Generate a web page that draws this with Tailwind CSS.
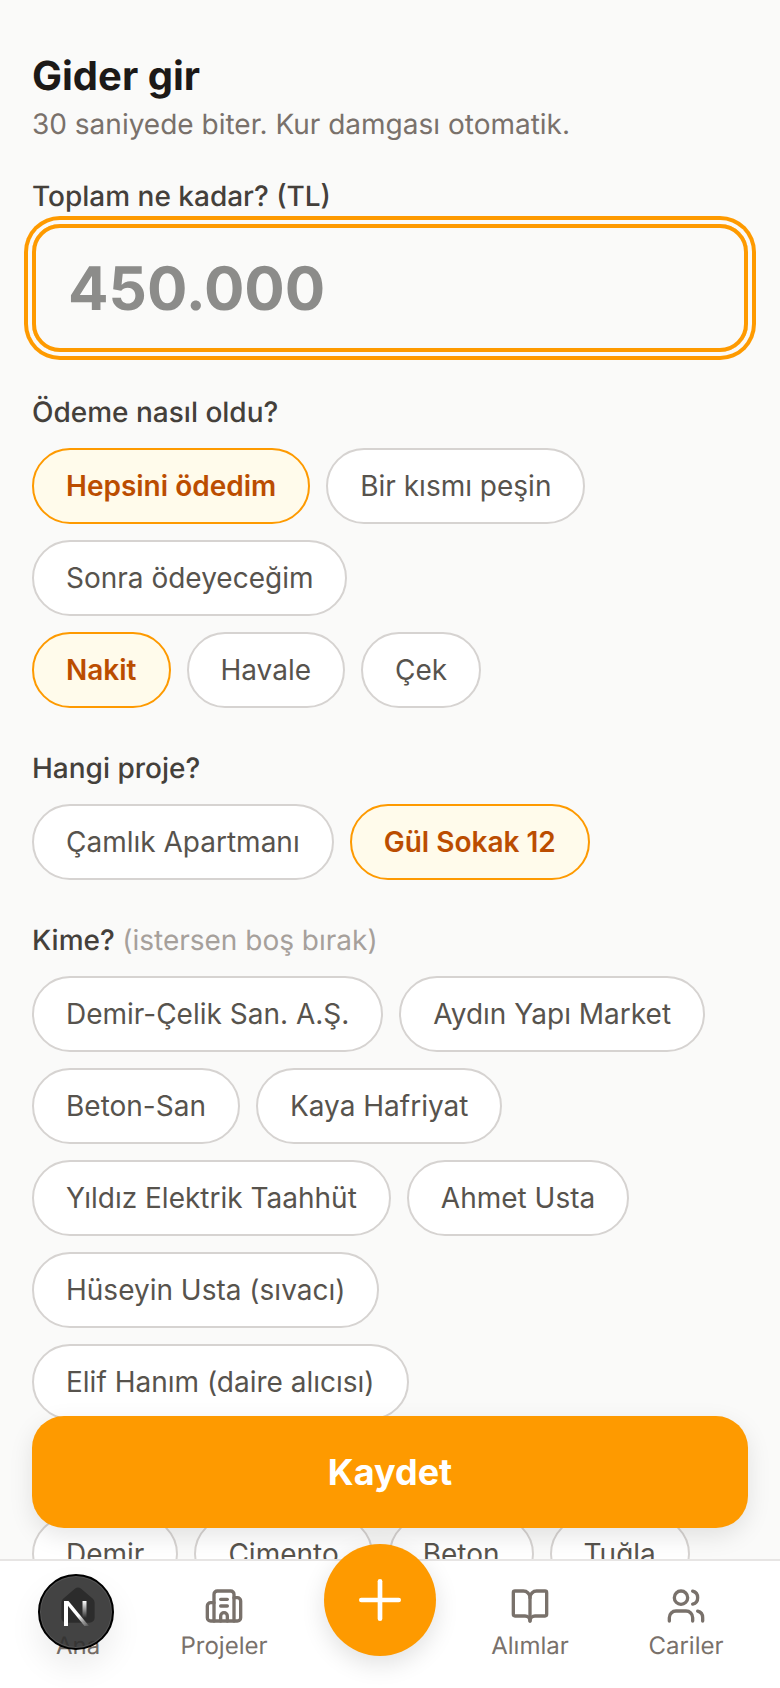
<!DOCTYPE html>
<html lang="tr">
<head>
  <meta charset="UTF-8">
  <meta name="viewport" content="width=device-width, initial-scale=1.0">
  <title>Gider gir</title>
  <script src="https://cdn.jsdelivr.net/npm/@tailwindcss/browser@4"></script>
</head>
<body class="bg-stone-50 font-['Inter',sans-serif] antialiased [text-rendering:geometricPrecision]">
  <div class="relative h-[1688px] w-[780px] overflow-hidden">
    <!-- Form -->
    <main class="px-8 pt-12">
      <h1 class="text-[40px] leading-[56px] font-bold text-stone-900">Gider gir</h1>
      <p class="text-[28px] leading-[40px] text-stone-500">30 saniyede biter. Kur damgası otomatik.</p>

      <label class="mt-8 block text-[28px] leading-[40px] font-medium text-stone-700">Toplam ne kadar? (TL)</label>
      <div class="mt-2 flex h-[128px] items-center rounded-[28px] border-4 border-amber-500 px-8 pt-[2px] text-[60px] font-bold text-[#8c8c8a] shadow-[0_0_0_4px_#fafaf9,0_0_0_8px_#fe9a00]">450.000</div>

      <p class="mt-10 text-[28px] leading-[40px] font-medium text-stone-700">Ödeme nasıl oldu?</p>
      <div class="mt-4 flex flex-wrap gap-4">
        <button class="h-[76px] rounded-full border-2 border-amber-500 bg-amber-50 px-8 text-[28px] font-semibold text-amber-700">Hepsini ödedim</button>
        <button class="h-[76px] rounded-full border-2 border-stone-300 bg-white px-8 text-[28px] text-stone-600">Bir kısmı peşin</button>
        <button class="h-[76px] rounded-full border-2 border-stone-300 bg-white px-8 text-[28px] text-stone-600">Sonra ödeyeceğim</button>
      </div>
      <div class="mt-4 flex flex-wrap gap-4">
        <button class="h-[76px] rounded-full border-2 border-amber-500 bg-amber-50 px-8 text-[28px] font-semibold text-amber-700">Nakit</button>
        <button class="h-[76px] rounded-full border-2 border-stone-300 bg-white px-8 text-[28px] text-stone-600">Havale</button>
        <button class="h-[76px] rounded-full border-2 border-stone-300 bg-white px-8 text-[28px] text-stone-600">Çek</button>
      </div>

      <p class="mt-10 text-[28px] leading-[40px] font-medium text-stone-700">Hangi proje?</p>
      <div class="mt-4 flex flex-wrap gap-4">
        <button class="h-[76px] rounded-full border-2 border-stone-300 bg-white px-8 text-[28px] text-stone-600">Çamlık Apartmanı</button>
        <button class="h-[76px] rounded-full border-2 border-amber-500 bg-amber-50 px-8 text-[28px] font-semibold text-amber-700">Gül Sokak 12</button>
      </div>

      <p class="mt-10 text-[28px] leading-[40px] font-medium text-stone-700">Kime? <span class="font-normal text-stone-400">(istersen boş bırak)</span></p>
      <div class="mt-4 flex flex-wrap gap-4">
        <button class="h-[76px] rounded-full border-2 border-stone-300 bg-white px-8 text-[28px] text-stone-600">Demir-Çelik San. A.Ş.</button>
        <button class="h-[76px] rounded-full border-2 border-stone-300 bg-white px-8 text-[28px] text-stone-600">Aydın Yapı Market</button>
        <button class="h-[76px] rounded-full border-2 border-stone-300 bg-white px-8 text-[28px] text-stone-600">Beton-San</button>
        <button class="h-[76px] rounded-full border-2 border-stone-300 bg-white px-8 text-[28px] text-stone-600">Kaya Hafriyat</button>
        <button class="h-[76px] rounded-full border-2 border-stone-300 bg-white px-8 text-[28px] text-stone-600">Yıldız Elektrik Taahhüt</button>
        <button class="h-[76px] rounded-full border-2 border-stone-300 bg-white px-8 text-[28px] text-stone-600">Ahmet Usta</button>
        <button class="h-[76px] rounded-full border-2 border-stone-300 bg-white px-8 text-[28px] text-stone-600">Hüseyin Usta (sıvacı)</button>
        <button class="h-[76px] rounded-full border-2 border-stone-300 bg-white px-8 text-[28px] text-stone-600">Elif Hanım (daire alıcısı)</button>
      </div>

      <p class="mt-10 text-[28px] leading-[40px] font-medium text-stone-700">Ne için?</p>
      <div class="mt-4 flex flex-wrap gap-4">
        <button class="h-[76px] rounded-full border-2 border-stone-300 bg-white px-8 text-[28px] text-stone-600">Demir</button>
        <button class="h-[76px] rounded-full border-2 border-stone-300 bg-white px-8 text-[28px] text-stone-600">Çimento</button>
        <button class="h-[76px] rounded-full border-2 border-stone-300 bg-white px-8 text-[28px] text-stone-600">Beton</button>
        <button class="h-[76px] rounded-full border-2 border-stone-300 bg-white px-8 text-[28px] text-stone-600">Tuğla</button>
      </div>
    </main>

    <!-- Save button, floats over the form -->
    <button class="absolute top-[1416px] left-8 h-[112px] w-[716px] rounded-[32px] bg-amber-500 text-[36px] font-bold text-white shadow-[0_8px_24px_rgba(0,0,0,0.1)]">Kaydet</button>

    <!-- Bottom nav -->
    <nav class="absolute right-0 bottom-0 left-0 flex h-[129px] border-t-2 border-stone-200 bg-white text-[24px] leading-[32px] text-stone-500">
      <a class="flex w-[156px] flex-col items-center gap-1 pt-[25px]">
        <svg class="h-10 w-10" viewBox="0 0 24 24" fill="#1c1917" stroke="#1c1917" stroke-width="2" stroke-linecap="round" stroke-linejoin="round"><path d="M3 10a2 2 0 0 1 .709-1.528l7-5.999a2 2 0 0 1 2.582 0l7 5.999A2 2 0 0 1 21 10v9a2 2 0 0 1-2 2H5a2 2 0 0 1-2-2z"/></svg>
        <span>Ana</span>
      </a>
      <a class="flex w-[136px] flex-col items-center gap-1 pt-[25px]">
        <svg class="h-10 w-10" viewBox="0 0 24 24" fill="none" stroke="currentColor" stroke-width="2" stroke-linecap="round" stroke-linejoin="round"><path d="M10 12h4"/><path d="M10 8h4"/><path d="M14 21v-3a2 2 0 0 0-4 0v3"/><path d="M6 10H4a2 2 0 0 0-2 2v7a2 2 0 0 0 2 2h16a2 2 0 0 0 2-2V9a2 2 0 0 0-2-2h-2"/><path d="M6 21V5a2 2 0 0 1 2-2h8a2 2 0 0 1 2 2v16"/></svg>
        <span>Projeler</span>
      </a>
      <div class="flex w-[176px] justify-center">
        <button class="-mt-[17px] flex h-[112px] w-[112px] items-center justify-center rounded-full bg-amber-500 text-white shadow-[0_8px_24px_rgba(0,0,0,0.12)]">
          <svg class="h-16 w-16" viewBox="0 0 24 24" fill="none" stroke="currentColor" stroke-width="1.75" stroke-linecap="round" stroke-linejoin="round"><path d="M5 12h14"/><path d="M12 5v14"/></svg>
        </button>
      </div>
      <a class="flex w-[124px] flex-col items-center gap-1 pt-[25px]">
        <svg class="h-10 w-10" viewBox="0 0 24 24" fill="none" stroke="currentColor" stroke-width="2" stroke-linecap="round" stroke-linejoin="round"><path d="M12 7v14"/><path d="M3 18a1 1 0 0 1-1-1V4a1 1 0 0 1 1-1h5a4 4 0 0 1 4 4 4 4 0 0 1 4-4h5a1 1 0 0 1 1 1v13a1 1 0 0 1-1 1h-6a3 3 0 0 0-3 3 3 3 0 0 0-3-3z"/></svg>
        <span>Alımlar</span>
      </a>
      <a class="flex w-[188px] flex-col items-center gap-1 pt-[25px]">
        <svg class="h-10 w-10" viewBox="0 0 24 24" fill="none" stroke="currentColor" stroke-width="2" stroke-linecap="round" stroke-linejoin="round"><path d="M16 21v-2a4 4 0 0 0-4-4H6a4 4 0 0 0-4 4v2"/><path d="M16 3.128a4 4 0 0 1 0 7.744"/><path d="M22 21v-2a4 4 0 0 0-3-3.87"/><circle cx="9" cy="7" r="4"/></svg>
        <span>Cariler</span>
      </a>
    </nav>

    <!-- Dev indicator badge -->
    <div class="absolute top-[1574px] left-[38px] flex h-[76px] w-[76px] items-center justify-center rounded-full border-2 border-black bg-[#2f2f2f]/90 shadow-[0_0_0_1px_#555_inset,0_16px_32px_rgba(0,0,0,0.08)]">
      <svg class="h-10 w-10" viewBox="0 0 40 40" fill="none">
        <defs>
          <linearGradient id="nDiag" x1="16" y1="16" x2="32" y2="36" gradientUnits="userSpaceOnUse"><stop offset="0.4" stop-color="#fff"/><stop offset="1" stop-color="#fff" stop-opacity="0"/></linearGradient>
          <linearGradient id="nStem" x1="28" y1="9" x2="28" y2="26" gradientUnits="userSpaceOnUse"><stop offset="0" stop-color="#fff"/><stop offset="1" stop-color="#fff" stop-opacity="0"/></linearGradient>
        </defs>
        <path d="M8 9h4v25H8z" fill="#fff"/>
        <path d="M8 9h4.5L33 34h-4.5z" fill="url(#nDiag)"/>
        <path d="M26.5 9h4v18h-4z" fill="url(#nStem)"/>
      </svg>
    </div>
  </div>
</body>
</html>
